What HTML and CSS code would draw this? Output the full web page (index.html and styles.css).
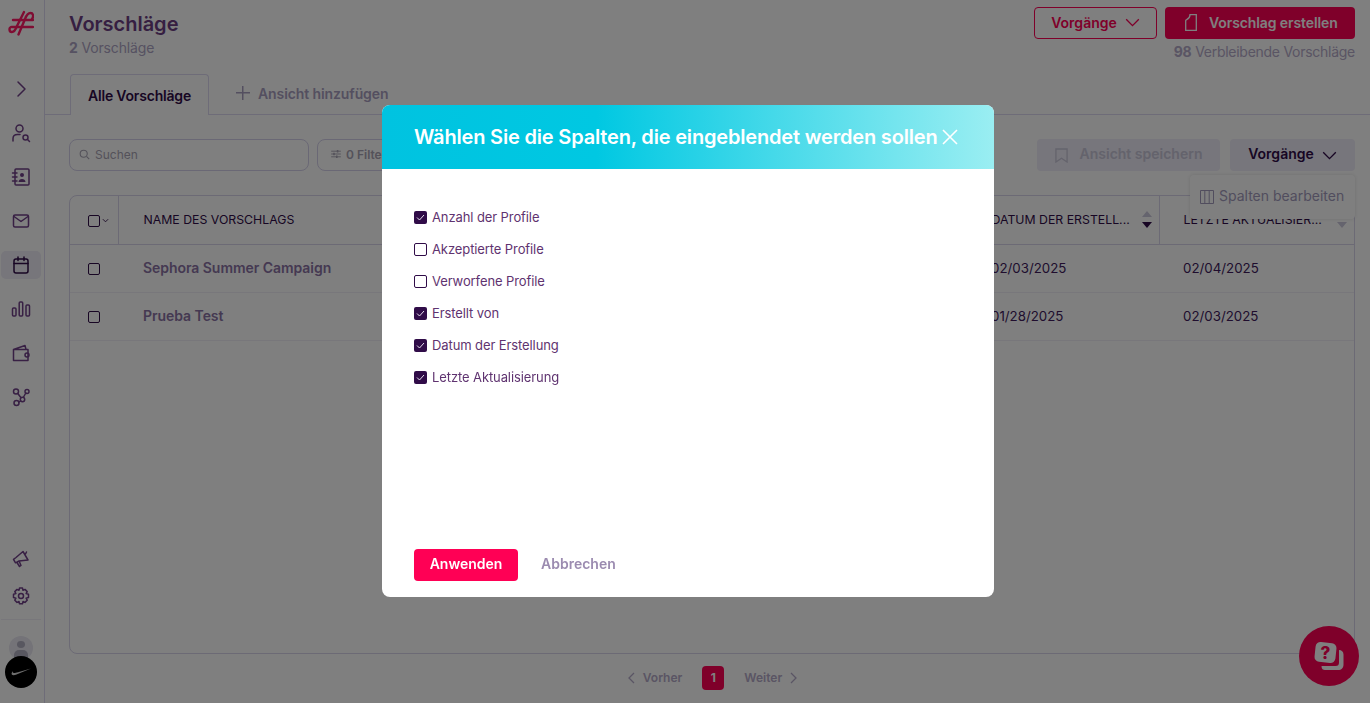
FILE: index.html
```html
<!DOCTYPE html>
<html lang="de">
<head>
    <meta charset="UTF-8">
    <title>Vorschläge</title>
    <link rel="stylesheet" href="styles.css">
</head>
<body>
    <div class="page">
        <!-- Sidebar -->
        <aside class="sidebar">
            <div class="logo">
                <svg width="26" height="26" viewBox="0 0 26 26" fill="none" stroke="#ff1a66" stroke-width="2.400" stroke-linecap="round">
                    <path d="M5 10H25"/>
                    <path d="M4 17H25"/>
                    <path d="M10.500 24.500L17 9C18.500 5 20 3 22.500 3C25.500 3 25.800 7 24 9"/>
                    <path d="M16 2L9 16C7.500 20 6 22 3.800 22C1 22 .8 18 3 17"/>
                </svg>
            </div>
            <nav class="side-nav">
                <a class="side-item" href="#"><svg class="ico" viewBox="0 0 20 20"><path d="M7 3l7 7-7 7"/></svg></a>
                <a class="side-item" href="#"><svg class="ico" viewBox="0 0 20 20"><circle cx="8.500" cy="5.500" r="3.500"/><path d="M2 18v-2.500C2 13 4 11.500 6.500 11.500H9"/><circle cx="14.500" cy="14.500" r="2.500"/><path d="M16.500 16.500l2 2"/></svg></a>
                <a class="side-item" href="#"><svg class="ico" viewBox="0 0 20 20"><rect x="4" y="2" width="14" height="16" rx="1"/><path d="M1.500 6H6M1.500 10H6M1.500 14H6"/><circle cx="11" cy="8" r="2" class="filled"/><path d="M7.500 15c0-4 7-4 7 0z" class="filled"/></svg></a>
                <a class="side-item" href="#"><svg class="ico" viewBox="0 0 20 20"><rect x="2.500" y="4" width="15" height="12" rx="1.500"/><path d="M3 5.500l7 5 7-5"/></svg></a>
                <a class="side-item is-active" href="#"><svg class="ico" viewBox="0 0 20 20"><rect x="3" y="4" width="14" height="14" rx="2"/><path d="M3 8.500h14M7 2v3.500M13 2v3.500"/></svg></a>
                <a class="side-item" href="#"><svg class="ico" viewBox="0 0 20 20"><rect x="1.500" y="9" width="3.500" height="8" rx="1"/><rect x="8.200" y="3" width="3.500" height="14" rx="1"/><rect x="15" y="6" width="3.500" height="11" rx="1"/></svg></a>
                <a class="side-item" href="#"><svg class="ico" viewBox="0 0 20 20"><path d="M2.500 6.500h14.500v11H2.500zM2.500 6.500L14 2.500l1 4"/><circle cx="16" cy="12" r="2"/></svg></a>
                <a class="side-item" href="#"><svg class="ico" viewBox="0 0 20 20"><circle cx="5" cy="4.500" r="2.500"/><circle cx="16" cy="4.500" r="2"/><circle cx="5.500" cy="16" r="2.500"/><circle cx="11.500" cy="12.500" r="2.200"/><path d="M6.800 6.500l3.200 4.200M14.800 6l-2.500 4.500M8 15l1.500-1"/></svg></a>
            </nav>
            <div class="side-bottom">
                <a class="side-item" href="#"><svg class="ico" viewBox="0 0 20 20"><path d="M12 2.500l5 8.500-9 1-3.500 1.800-2-3.500L5 8.500zM6 13.500l2.500 4 1.500-1-1.500-3.500M14.500 5l1-2"/></svg></a>
                <a class="side-item" href="#"><svg class="ico" viewBox="0 0 20 20"><circle cx="10" cy="10" r="2.500"/><path d="M8.500 2h3l.5 2.300 2-.9 2.200 2.200-1.100 2 2.400.7v3.200l-2.400.7 1.100 2-2.200 2.200-2-.9-.5 2.300h-3l-.5-2.300-2 .9-2.200-2.200 1.100-2-2.400-.7V8.300l2.400-.7-1.100-2 2.200-2.200 2 .9z"/></svg></a>
                <div class="side-rule"></div>
                <div class="avatar-stack">
                    <div class="avatar-user"><span class="avatar-head"></span><span class="avatar-body"></span></div>
                    <div class="avatar-brand">
                        <svg width="20" height="8" viewBox="0 0 20 8"><path d="M20 .5L5.500 6.500C3.500 7.300 1.500 7.500.8 6.500.2 5.600.8 4.300 2 3 1.500 4.200 1.800 5 3 5 4 5 5.500 4.600 7 4.200z" fill="#ddd"/></svg>
                    </div>
                </div>
            </div>
        </aside>

        <main class="main">
            <header class="top">
                <div>
                    <h1 class="title">Vorschläge</h1>
                    <p class="count"><b>2</b> Vorschläge</p>
                </div>
                <div class="top-right">
                    <div class="top-buttons">
                        <button class="btn btn-outline" type="button">Vorgänge
                            <svg class="chev" viewBox="0 0 16 10"><path d="M1 1.500L8 8.500l7-7"/></svg>
                        </button>
                        <button class="btn btn-primary" type="button">
                            <svg class="doc" viewBox="0 0 12 17"><path d="M5 .7h6.300v15.600H.7V6.500C.7 5.500 5 5.500 5 .7z"/></svg>
                            Vorschlag erstellen
                        </button>
                    </div>
                    <p class="remaining"><b>98</b> Verbleibende Vorschläge</p>
                </div>
            </header>

            <div class="tabs">
                <a class="tab" href="#">Alle Vorschläge</a>
                <a class="tab-add" href="#"><span class="plus"></span>Ansicht hinzufügen</a>
            </div>

            <div class="toolbar">
                <label class="search">
                    <svg class="search-ico" viewBox="0 0 14 14"><circle cx="6" cy="6" r="4.500"/><path d="M9.500 9.500L13 13"/></svg>
                    Suchen
                </label>
                <button class="filter" type="button">
                    <svg class="filter-ico" viewBox="0 0 12 10"><path d="M0 1.500h12M0 5h12M0 8.500h12"/><path class="knob" d="M8 0v3M3.500 3.500v3M7 7v3"/></svg>
                    <b>0 Filter</b>
                </button>
                <div class="toolbar-right">
                    <button class="btn btn-save" type="button">
                        <svg class="bookmark" viewBox="0 0 14 16"><path d="M1 1h12v14l-6-4-6 4z"/></svg>
                        Ansicht speichern
                    </button>
                    <button class="btn btn-actions" type="button">Vorgänge
                        <svg class="chev" viewBox="0 0 16 10"><path d="M1 1.500L8 8.500l7-7"/></svg>
                    </button>
                    <div class="menu">
                        <svg class="cols-ico" viewBox="0 0 14 14"><path d="M.5.500h13v13H.5zM4.800.500v13M9.200.500v13"/></svg>
                        Spalten bearbeiten
                    </div>
                </div>
            </div>

            <div class="table-wrap">
                <table class="grid">
                    <colgroup>
                        <col class="c-check"><col><col class="c-date"><col class="c-last">
                    </colgroup>
                    <thead>
                        <tr>
                            <th class="cell-check"><span class="box"></span><svg class="mini-chev" viewBox="0 0 8 5"><path d="M1 1l3 3 3-3"/></svg></th>
                            <th class="th-name">NAME DES VORSCHLAGS</th>
                            <th class="th-sort"><div class="th-inner">DATUM DER ERSTELL...<span class="sort"><i class="up"></i><i class="down"></i></span></div></th>
                            <th class="th-sort"><div class="th-inner">LETZTE AKTUALISIER...<span class="sort"><i class="up"></i><i class="down faint"></i></span></div></th>
                        </tr>
                    </thead>
                    <tbody>
                        <tr>
                            <td class="cell-check"><span class="box"></span></td>
                            <td class="name">Sephora Summer Campaign</td>
                            <td class="date">02/03/2025</td>
                            <td class="date">02/04/2025</td>
                        </tr>
                        <tr>
                            <td class="cell-check"><span class="box"></span></td>
                            <td class="name">Prueba Test</td>
                            <td class="date">01/28/2025</td>
                            <td class="date">02/03/2025</td>
                        </tr>
                    </tbody>
                </table>
            </div>

            <div class="pager">
                <svg class="pager-chev" viewBox="0 0 8 12"><path d="M7 1L2 6l5 5"/></svg>
                <span class="pager-link">Vorher</span>
                <span class="pager-num">1</span>
                <span class="pager-link">Weiter</span>
                <svg class="pager-chev" viewBox="0 0 8 12"><path d="M1 1l5 5-5 5"/></svg>
            </div>
        </main>

        <button class="help" type="button">
            <svg width="34" height="34" viewBox="0 0 34 34">
                <path d="M27 11c2.500 0 4.500 1.500 4.500 4.500v10c0 3.500-2 5.500-5.500 5.500H13c-2 0-3.500-1-3.500-4h14c2.500 0 3.500-1 3.500-3.500z" fill="#fff"/>
                <rect x="3" y="3.500" width="21" height="20" rx="5" transform="rotate(6 13.500 13.500)" fill="#fff"/>
                <text x="13.500" y="20" class="help-mark">?</text>
            </svg>
        </button>
    </div>

    <!-- Modal -->
    <div class="overlay">
        <div class="modal">
            <div class="modal-head">
                <h2>Wählen Sie die Spalten, die eingeblendet werden sollen</h2>
                <svg class="close" viewBox="0 0 16 16"><path d="M1 1l14 14M15 1L1 15"/></svg>
            </div>
            <div class="modal-body">
                <div class="opt"><span class="check on"><svg viewBox="0 0 13 13"><path d="M3 6.500l2.500 2.500L10 4"/></svg></span>Anzahl der Profile</div>
                <div class="opt"><span class="check"></span>Akzeptierte Profile</div>
                <div class="opt"><span class="check"></span>Verworfene Profile</div>
                <div class="opt"><span class="check on"><svg viewBox="0 0 13 13"><path d="M3 6.500l2.500 2.500L10 4"/></svg></span>Erstellt von</div>
                <div class="opt"><span class="check on"><svg viewBox="0 0 13 13"><path d="M3 6.500l2.500 2.500L10 4"/></svg></span>Datum der Erstellung</div>
                <div class="opt"><span class="check on"><svg viewBox="0 0 13 13"><path d="M3 6.500l2.500 2.500L10 4"/></svg></span>Letzte Aktualisierung</div>
            </div>
            <div class="modal-foot">
                <button class="apply" type="button">Anwenden</button>
                <button class="cancel" type="button">Abbrechen</button>
            </div>
        </div>
    </div>
</body>
</html>
```

FILE: styles.css
```css
* {
    box-sizing: border-box;
}
html, body {
    height: 100%;
}
body {
    margin: 0;
    overflow: hidden;
    background: #fff;
    color: #300c48;
    font-family: Inter, "Open Sans", Arial, sans-serif;
}
h1, h2, p {
    margin: 0;
}
button {
    font-family: inherit;
    cursor: pointer;
}
a {
    color: inherit;
    text-decoration: none;
}
.page {
    display: flex;
    height: 703px;
}

/* Sidebar */
.sidebar {
    width: 45px;
    flex: none;
    display: flex;
    flex-direction: column;
    border-right: 1px solid #dcd8f0;
    padding-bottom: 15px;
}
.logo {
    height: 75px;
    padding: 10px 0 0 8px;
}
.side-nav {
    display: flex;
    flex-direction: column;
    gap: 16px;
}
.side-item {
    height: 28px;
    width: 40px;
    margin-left: 1px;
    border-radius: 5px;
    display: flex;
    align-items: center;
    justify-content: center;
}
.side-item.is-active {
    background: #eeecf6;
}
.ico {
    width: 20px;
    height: 20px;
    fill: none;
    stroke: #704088;
    stroke-width: 1.5;
    stroke-linecap: round;
    stroke-linejoin: round;
}
.ico .filled {
    fill: #704088;
    stroke: none;
}
.is-active .ico {
    stroke: #300c48;
}
.side-bottom {
    margin-top: auto;
    display: flex;
    flex-direction: column;
    gap: 9px;
}
.side-rule {
    height: 1px;
    margin-left: 1px;
    width: 40px;
    background: #f0eef6;
}
.avatar-stack {
    margin-top: 7px;
    display: flex;
    flex-direction: column;
    align-items: center;
    padding-right: 3px;
}
.avatar-user {
    width: 24px;
    height: 24px;
    border-radius: 50%;
    background: #e8e6f0;
    display: flex;
    flex-direction: column;
    align-items: center;
    padding-top: 5px;
    overflow: hidden;
}
.avatar-head {
    width: 8px;
    height: 8px;
    border-radius: 50%;
    background: #b0aec0;
}
.avatar-body {
    width: 14px;
    height: 12px;
    margin-top: 2px;
    border-radius: 5px 5px 0 0;
    background: #b0aec0;
}
.avatar-brand {
    width: 32px;
    height: 32px;
    margin-top: -4px;
    border-radius: 50%;
    background: #000;
    display: flex;
    align-items: center;
    justify-content: center;
    position: relative;
}

/* Main */
.main {
    flex: 1;
    min-width: 0;
    display: flex;
    flex-direction: column;
}
.top {
    display: flex;
    justify-content: space-between;
    height: 74px;
    padding: 7px 15px 0 24px;
}
.title {
    margin-top: 5px;
    font-size: 20px;
    line-height: 24px;
    font-weight: 600;
    color: #6c3e84;
}
.count {
    margin-top: 2px;
    font-size: 14px;
    line-height: 20px;
    letter-spacing: -.15px;
    color: #ada4c4;
}
.count b, .remaining b {
    font-weight: 700;
}
.top-right {
    display: flex;
    flex-direction: column;
    align-items: flex-end;
}
.top-buttons {
    display: flex;
    gap: 8px;
}
.btn {
    height: 32px;
    padding: 0 0 1px;
    border-radius: 4px;
    border: 0;
    font-size: 14px;
    font-weight: 600;
    display: flex;
    align-items: center;
    justify-content: center;
}
.chev {
    width: 15px;
    height: 9px;
    margin-left: 8px;
    fill: none;
    stroke: currentColor;
    stroke-width: 1.5;
}
.btn-outline {
    width: 123px;
    background: #fff;
    border: 1px solid #ff0055;
    color: #ff0055;
}
.btn-primary {
    width: 190px;
    padding-left: 20px;
    justify-content: flex-start;
    background: #ff0055;
    color: #fff;
    letter-spacing: -.1px;
}
.doc {
    width: 12px;
    height: 17px;
    margin-right: 12px;
    fill: none;
    stroke: #fff;
    stroke-width: 1.300;
}
.remaining {
    margin-top: 3px;
    font-size: 14px;
    line-height: 20px;
    letter-spacing: -.27px;
    color: #b4aac8;
}
.tabs {
    height: 41px;
    flex: none;
    display: flex;
    align-items: flex-start;
    padding-left: 25px;
    border-bottom: 1px solid #dcd8f0;
}
.tab {
    height: 41px;
    width: 139px;
    border: 1px solid #dcd8f0;
    border-bottom: 0;
    border-radius: 4px 4px 0 0;
    background: #fff;
    font-size: 14px;
    font-weight: 600;
    letter-spacing: -.2px;
    color: #300c48;
    display: flex;
    align-items: center;
    justify-content: center;
}
.tab-add {
    display: flex;
    align-items: center;
    height: 38px;
    margin-left: 27px;
    font-size: 14px;
    font-weight: 600;
    letter-spacing: -.1px;
    color: #a89ec0;
}
.plus {
    width: 14px;
    height: 14px;
    margin-right: 8px;
    background:
        linear-gradient(#a89ec0, #a89ec0) center / 14px 1.5px no-repeat,
        linear-gradient(#a89ec0, #a89ec0) center / 1.5px 14px no-repeat;
}

/* Toolbar */
.toolbar {
    display: flex;
    gap: 8px;
    margin: 24px 15px 0 24px;
    height: 32px;
    flex: none;
}
.search {
    width: 240px;
    border: 1px solid #d4d0ea;
    border-radius: 8px;
    display: flex;
    align-items: center;
    padding: 0 0 2px 9px;
    font-size: 12px;
    color: #a8a4b4;
}
.search-ico {
    width: 11px;
    height: 11px;
    margin: 1px 5px 0 0;
    fill: none;
    stroke: #a8a4b4;
    stroke-width: 1.4;
}
.filter {
    width: 120px;
    background: #fff;
    border: 1px solid #d4d0ea;
    border-radius: 8px;
    display: flex;
    align-items: center;
    padding: 0 0 2px 13px;
    font-size: 12px;
    color: #a8a4b4;
}
.filter b {
    font-weight: 600;
}
.filter-ico {
    width: 10px;
    height: 8px;
    margin-right: 5px;
    fill: none;
    stroke: #a8a4b4;
    stroke-width: 1.2;
}
.filter-ico .knob {
    stroke-width: 2;
}
.toolbar-right {
    margin-left: auto;
    display: flex;
    gap: 10px;
    position: relative;
}
.btn-save {
    width: 183px;
    padding-bottom: 3px;
    background: #eeecf8;
    color: #c8c6d8;
}
.bookmark {
    width: 13px;
    height: 15px;
    margin: 3px 12px 0 0;
    fill: none;
    stroke: #c8c6d8;
    stroke-width: 1.4;
}
.btn-actions {
    width: 125px;
    padding-bottom: 3px;
    background: #eeecf8;
    color: #300c48;
}
.btn-actions .chev {
    margin-top: 3px;
}
.menu {
    position: absolute;
    z-index: 2;
    top: 36px;
    right: 0;
    width: 165px;
    height: 44px;
    padding: 0 0 3px 10px;
    background: #fff;
    border-radius: 4px;
    box-shadow: 0 0 4px rgba(0, 0, 0, .12);
    display: flex;
    align-items: center;
    font-size: 14px;
    color: #a39bbd;
}
.cols-ico {
    width: 14px;
    height: 14px;
    margin: 3px 5px 0 0;
    fill: none;
    stroke: #a39bbd;
    stroke-width: 1;
}

/* Table */
.table-wrap {
    margin: 24px 15px 0 24px;
    height: 459px;
    flex: none;
    border: 1px solid #d8d4ea;
    border-radius: 8px;
    overflow: hidden;
}
.grid {
    width: 100%;
    table-layout: fixed;
    border-collapse: collapse;
}
.c-check {
    width: 48px;
}
.c-date {
    width: 192px;
}
.c-last {
    width: 195px;
}
.grid th {
    height: 48px;
    padding: 0 24px;
    text-align: left;
    font-size: 12.300px;
    font-weight: 400;
    color: #300c48;
    border-bottom: 1px solid #d8d4ea;
    border-left: 1px solid #d8d4ea;
    white-space: nowrap;
}
.grid th:first-child {
    border-left: 0;
}
.grid td {
    height: 48px;
    padding: 0 24px 1px;
    font-size: 13px;
    border-bottom: 1px solid #f0eef6;
}
.grid .th-name, .grid .name {
    padding-left: 25px;
}
.grid .cell-check {
    padding: 0 0 0 18px;
}
.box {
    display: inline-block;
    width: 12px;
    height: 12px;
    border: 1px solid #300c48;
    border-radius: 2px;
    vertical-align: middle;
}
.mini-chev {
    width: 7px;
    height: 5px;
    margin-left: 2px;
    fill: none;
    stroke: #300c48;
    stroke-width: 1;
    vertical-align: middle;
}
.name {
    font-weight: 600;
    font-size: 14px !important;
    letter-spacing: -.05px;
    color: #8a72a4;
}
.date {
    color: #401a5c;
    font-weight: 400;
    font-size: 13.300px !important;
}
.th-inner {
    display: flex;
    justify-content: space-between;
    align-items: center;
}
.th-sort {
    padding-right: 7px !important;
}
.sort {
    display: flex;
    flex-direction: column;
    gap: 5px;
}
.sort i {
    width: 0;
    height: 0;
    border-left: 5px solid transparent;
    border-right: 5px solid transparent;
}
.sort .up {
    border-bottom: 6px solid #cbc8dc;
}
.sort .down {
    border-top: 6px solid #300c48;
}
.sort .down.faint {
    border-top-color: #cbc8dc;
}

/* Pager */
.pager {
    margin-top: 12px;
    display: flex;
    align-items: center;
    justify-content: center;
    height: 24px;
    padding-left: 10px;
    font-size: 12px;
    font-weight: 600;
    color: #b4aac8;
}
.pager-chev {
    width: 8px;
    height: 12px;
    fill: none;
    stroke: #b4aac8;
    stroke-width: 1.3;
}
.pager-link {
    margin: 0 8px 2px;
}
.pager-num {
    width: 22px;
    height: 24px;
    margin: 0 12px;
    padding-bottom: 2px;
    border-radius: 4px;
    background: #ff0055;
    color: #fff;
    font-weight: 700;
    display: flex;
    align-items: center;
    justify-content: center;
}
.help {
    position: absolute;
    left: 1299px;
    top: 626px;
    width: 60px;
    height: 60px;
    border: 0;
    padding: 0;
    border-radius: 50%;
    background: #ff0055;
    display: flex;
    align-items: center;
    justify-content: center;
}
.help-mark {
    font-size: 17px;
    font-weight: 800;
    text-anchor: middle;
    fill: #ff0055;
}

/* Modal */
.overlay {
    position: fixed;
    inset: 0;
    z-index: 10;
    background: rgba(0, 0, 0, .5);
    padding-left: 382px;
    padding-top: 105px;
}
.modal {
    width: 612px;
    height: 492px;
    background: #fff;
    border-radius: 8px;
    overflow: hidden;
    display: flex;
    flex-direction: column;
}
.modal-head {
    height: 64px;
    flex: none;
    padding: 0 36px 0 32px;
    display: flex;
    align-items: center;
    justify-content: space-between;
    background: linear-gradient(90deg, #00c3e0 0%, #00c8e2 35%, #9aeef2 100%);
}
.modal-head h2 {
    font-size: 20px;
    font-weight: 600;
    letter-spacing: -.18px;
    color: #fff;
    white-space: nowrap;
}
.close {
    width: 16px;
    height: 16px;
    fill: none;
    stroke: #fff;
    stroke-width: 1.600;
    flex: none;
}
.modal-body {
    flex: 1;
    padding: 32px 32px 0;
}
.opt {
    height: 32px;
    padding-bottom: 1px;
    display: flex;
    align-items: center;
    font-size: 13px;
    letter-spacing: -.1px;
    color: #5f3370;
}
.check {
    width: 13px;
    height: 13px;
    margin: 1px 5px 0 0;
    border: 1px solid #300c48;
    border-radius: 2px;
    display: flex;
}
.check.on {
    background: #300c48;
    border: 0;
}
.check svg {
    width: 13px;
    height: 13px;
    fill: none;
    stroke: #e4dcec;
    stroke-width: 1;
}
.modal-foot {
    display: flex;
    align-items: center;
    gap: 23px;
    padding: 0 32px 16px;
}
.apply {
    width: 104px;
    height: 32px;
    padding: 0 0 3px;
    border: 0;
    border-radius: 4px;
    background: #ff0055;
    color: #fff;
    font-size: 14px;
    font-weight: 600;
}
.cancel {
    border: 0;
    padding: 0 0 3px;
    background: none;
    color: #9b8bb0;
    font-size: 14px;
    font-weight: 600;
}
```
